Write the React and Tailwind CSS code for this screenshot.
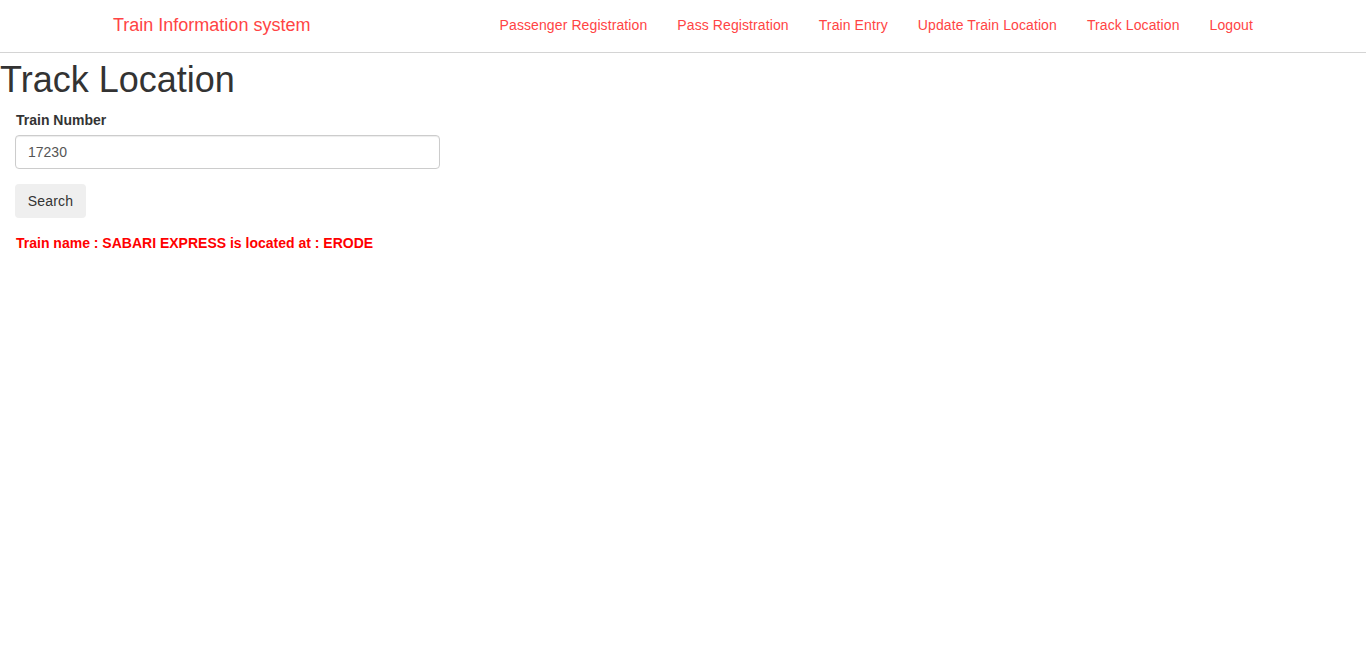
export default function App() {
  const links = [
    "Passenger Registration",
    "Pass Registration",
    "Train Entry",
    "Update Train Location",
    "Track Location",
    "Logout",
  ];
  return (
    <div className="min-h-[654px] bg-white font-['Liberation_Sans',Arial,sans-serif] text-[14px] text-[#333]">
      <nav className="h-[53px] border-b border-[#d4d4d4] bg-white pb-[2px]">
        <div className="mx-auto flex h-full w-[1170px] items-center justify-between px-[15px]">
          <a className="text-[18px] leading-[20px] text-[#f44]" href="#">
            Train Information system
          </a>
          <ul className="-mr-[15px] flex items-center">
            {links.map((l) => (
              <li key={l}>
                <a className="block px-[15px] text-[14px] leading-[20px] tracking-[0.1px] text-[#f44]" href="#">
                  {l}
                </a>
              </li>
            ))}
          </ul>
        </div>
      </nav>
      <h1 className="mt-[7px] mb-[10px] text-[36px] leading-[39.6px] font-normal text-[#333]">
        Track Location
      </h1>
      <div className="px-[15px]">
        <label className="mb-[5px] block pl-px text-[14px] leading-[20px] font-bold text-[#333]">
          Train Number
        </label>
        <input
          className="mb-[15px] block h-[34px] w-[425px] rounded-[4px] border border-[#ccc] px-[12px] py-[6px] text-[14px] text-[#555] shadow-[inset_0_1px_1px_rgba(0,0,0,0.075)] outline-none"
          defaultValue="17230"
        />
        <button className="block h-[34px] w-[71px] rounded-[4px] bg-[#efefef] text-center text-[14px] leading-[20px] tracking-[0.2px] text-[#333]">
          Search
        </button>
        <p className="mt-[15px] pl-px text-[14px] leading-[20px] font-bold text-[#ff0000]">
          Train name : SABARI EXPRESS is located at : ERODE
        </p>
      </div>
    </div>
  );
}
